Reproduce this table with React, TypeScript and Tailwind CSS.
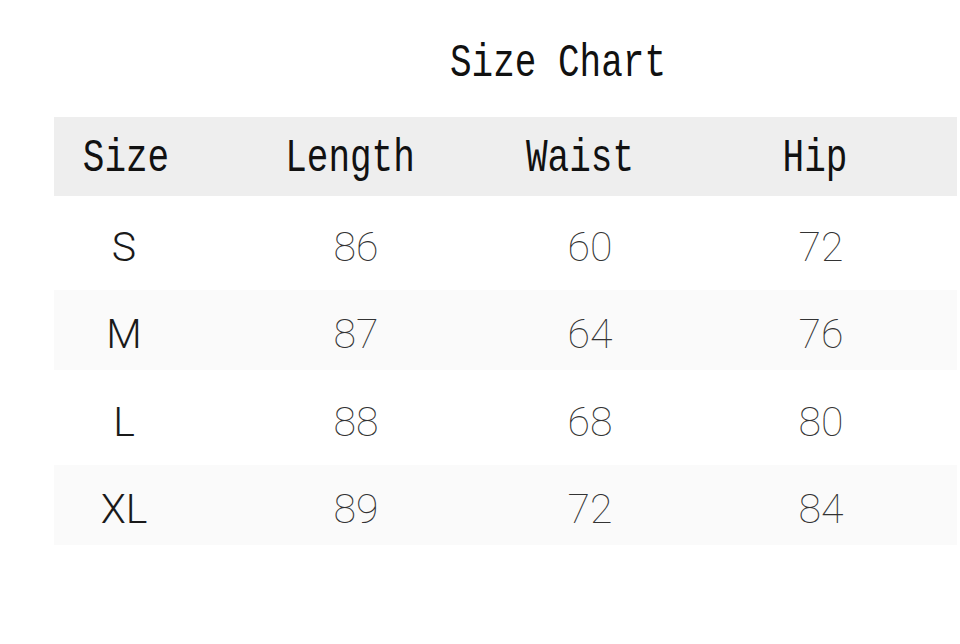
const header = ["Size", "Length", "Waist", "Hip"];

const rows = [
  { size: "S", length: 86, waist: 60, hip: 72, shade: false, h: "h-[94px]" },
  { size: "M", length: 87, waist: 64, hip: 76, shade: true, h: "h-[80px]" },
  { size: "L", length: 88, waist: 68, hip: 80, shade: false, h: "h-[95px]" },
  { size: "XL", length: 89, waist: 72, hip: 84, shade: true, h: "h-[80px]" },
];

const mono = "font-['Liberation_Mono',monospace] text-[36px] text-[#111]";
const body = "font-['Roboto','Liberation_Sans',sans-serif] text-[41px] leading-none";

export default function App() {
  return (
    <div className="w-[960px] h-[644px] bg-white overflow-hidden">
      <div className="flex justify-center pt-[47px] pl-[156px] h-[117px]">
        <span className={`${mono} inline-block scale-y-[1.3] leading-none h-[44px]`}>
          Size Chart
        </span>
      </div>

      <div className="ml-[54px] w-[903px]">
        {/* header row */}
        <div className="grid grid-cols-[140px_324px_144px_295px] h-[79px] items-center pt-[5px] bg-[#eeeeee]">
          {header.map((label, i) => (
            <div
              key={label}
              className={
                i === 0
                  ? "flex justify-center pl-[4px]"
                  : i === 1
                  ? "flex justify-center pr-[12px]"
                  : i === 2
                  ? "flex justify-center pr-[20px]"
                  : "flex justify-center pl-[11px]"
              }>
              <span className={`${mono} inline-block scale-y-[1.3] leading-none`}>
                {label}
              </span>
            </div>
          ))}
        </div>

        {rows.map((r) => (
          <div
            key={r.size}
            className={`grid grid-cols-[140px_324px_144px_295px] items-center pt-[9px] ${r.h} ${
              r.shade ? "bg-[#fafafa]" : "bg-white"
            }`}>
            <div className={`${body} text-center font-light text-[#1a1a1a]`}>{r.size}</div>
            <div className={`${body} text-center font-thin text-[#333]`}>{r.length}</div>
            <div className={`${body} text-center font-thin text-[#333]`}>{r.waist}</div>
            <div className={`${body} text-center font-thin text-[#333] pl-[23px]`}>{r.hip}</div>
          </div>
        ))}
      </div>
    </div>
  );
}
